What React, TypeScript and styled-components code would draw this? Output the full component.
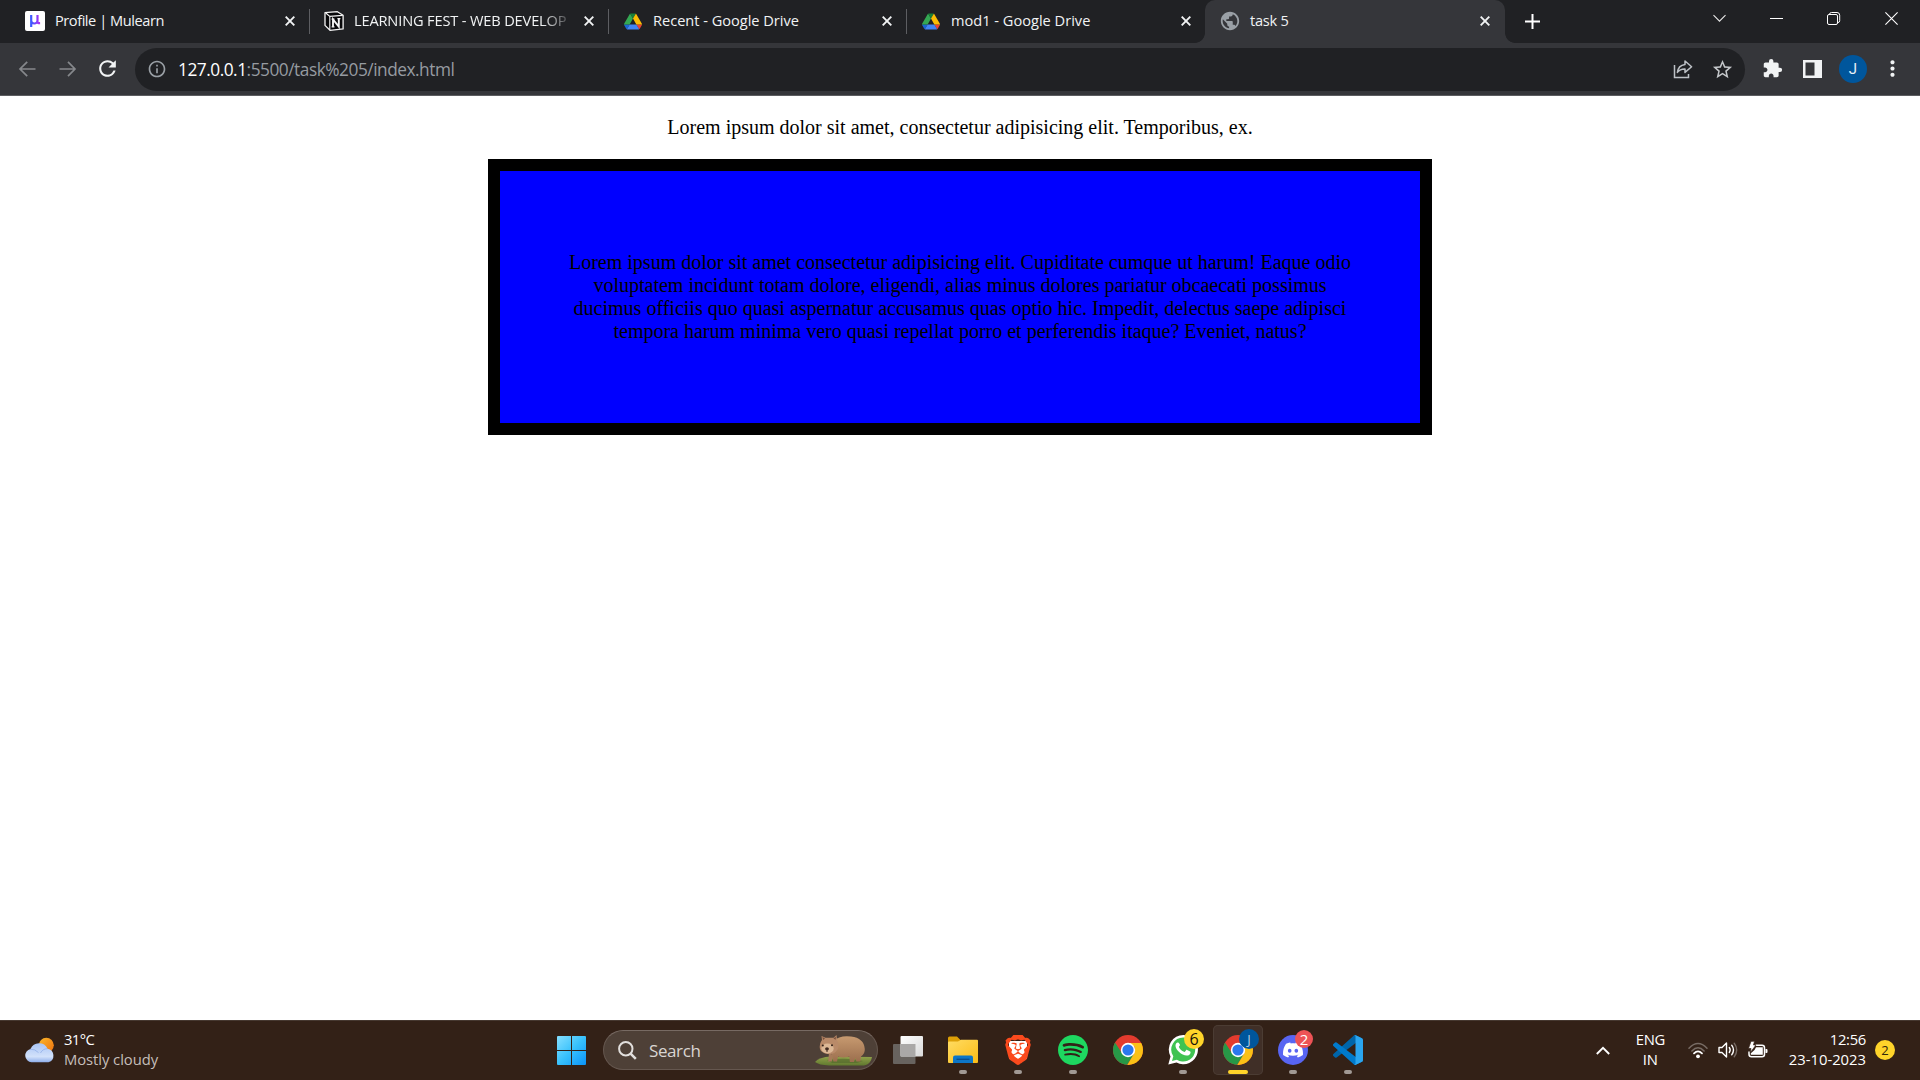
import React from 'react';
import styled, { createGlobalStyle, css } from 'styled-components';
import { MdRefresh, MdInfoOutline, MdExtension, MdStarBorder, MdPublic, MdMoreVert } from 'react-icons/md';
import { SiBrave, SiSpotify, SiDiscord } from 'react-icons/si';

const GlobalStyle = createGlobalStyle`
  * { box-sizing: border-box; }
  body { margin: 0; background: #fff; overflow: hidden; }
  svg { display: block; flex: none; }
`;

const uiFont = css`font-family: 'Open Sans', 'Noto Sans', sans-serif;`;

const Screen = styled.div`
  display: flex;
  flex-direction: column;
  width: 1920px;
  height: 1080px;
  ${uiFont}
`;

/* ---------- tab strip ---------- */
const TabStrip = styled.header`
  display: flex;
  height: 43px;
  padding-left: 10px;
  background: #202124;
  color: #f1f3f4;
`;

const TabItem = styled.div<{ $active?: boolean; $divider?: boolean; $width: number }>`
  position: relative;
  display: flex;
  align-items: center;
  width: ${p => p.$width}px;
  height: 43px;
  padding: 0 ${p => (p.$active ? 15 : 14)}px 1px 15px;
  border-radius: 10px 10px 0 0;
  background: ${p => (p.$active ? '#35363a' : 'transparent')};

  &::after {
    content: '';
    display: ${p => (p.$divider ? 'block' : 'none')};
    position: absolute;
    right: -1px;
    top: 9px;
    width: 1px;
    height: 25px;
    background: #5d5e62;
  }
`;

const Flare = styled.span<{ $side: 'left' | 'right' }>`
  position: absolute;
  bottom: 0;
  ${p => p.$side}: -10px;
  width: 10px;
  height: 10px;
  background: radial-gradient(circle at ${p => (p.$side === 'left' ? '0 0' : '100% 0')}, transparent 9.5px, #35363a 10.2px);
`;

const Favicon = styled.span`
  display: flex;
  align-items: center;
  justify-content: center;
  flex: none;
  width: 20px;
  height: 20px;
  margin-right: 10px;
`;

const TabTitle = styled.span<{ $spacing: number; $fade?: boolean }>`
  flex: 1;
  white-space: nowrap;
  padding-bottom: 3px;
  font-size: 14.6px;
  line-height: 20px;
  letter-spacing: ${p => p.$spacing}px;
  ${p => p.$fade && css`
    -webkit-mask-image: linear-gradient(90deg, #000 188px, transparent 220px);
    mask-image: linear-gradient(90deg, #000 188px, transparent 220px);
  `}
`;

const MuBadge = styled.span`
  width: 20px;
  height: 20px;
  border-radius: 2px;
  background: #fff;
  display: flex;
  align-items: center;
  justify-content: center;
`;

const NewTab = styled.div`
  display: flex;
  align-items: center;
  margin-left: 20px;
  padding-bottom: 1px;
`;

const WindowControls = styled.div`
  display: flex;
  align-items: flex-start;
  margin-left: auto;
  padding: 12px 22px 0 0;
  gap: 44px;
`;

/* ---------- toolbar ---------- */
const Toolbar = styled.div`
  display: flex;
  align-items: center;
  height: 53px;
  padding: 0 0 1px 17px;
  background: #35363a;
  border-bottom: 1px solid #5c5d60;
`;

const NavButtons = styled.div`
  display: flex;
  flex: none;
  align-items: center;
  gap: 20px;
  width: 118px;

  svg:last-child { margin-left: -2px; }
`;

const UrlBar = styled.div`
  display: flex;
  flex: none;
  align-items: center;
  width: 1610px;
  height: 43px;
  margin-top: 1px;
  padding: 0 11px 0 12px;
  border-radius: 22px;
  background: #202124;
`;

const Url = styled.span`
  flex: 1;
  margin-left: 11px;
  padding-top: 1px;
  color: #969ba1;
  font-size: 17.3px;
  line-height: 24px;
  letter-spacing: -0.48px;
  b { color: #fff; font-weight: 400; }
`;

const UrlActions = styled.div`
  display: flex;
  align-items: center;
  gap: 18px;
`;

const Extensions = styled.div`
  display: flex;
  margin-left: 7px;
`;

const ToolButton = styled.span`
  display: flex;
  align-items: center;
  justify-content: center;
  width: 40px;
  height: 40px;
`;

const Avatar = styled.span`
  display: flex;
  align-items: center;
  justify-content: center;
  width: 28px;
  height: 28px;
  margin-left: 2px;
  border-radius: 50%;
  background: #00569c;
  color: #e8f0f8;
  font: 15px Roboto, sans-serif;
`;

/* ---------- page ---------- */
const Page = styled.main`
  flex: 1;
  display: flex;
  flex-direction: column;
  align-items: center;
  background: #fff;
  color: #000;
  font-family: 'Liberation Serif', 'Times New Roman', serif;
  font-size: 20px;
  line-height: 23px;
  text-align: center;
`;

const Intro = styled.p`
  margin: 20px 0;
`;

const BlueBox = styled.section`
  width: 944px;
  height: 276px;
  padding: 80px 60px;
  border: 12px solid #000;
  background: #00f;
`;

const Copy = styled.p`
  margin: 0;
`;

/* ---------- taskbar ---------- */
const Taskbar = styled.footer`
  display: flex;
  align-items: center;
  height: 60px;
  background: #332117;
  box-shadow: inset 0 1px #463830;
  color: #fff;
`;

const Weather = styled.div`
  display: flex;
  align-items: center;
  width: 557px;
  padding-left: 24px;
  gap: 8px;
`;

const Stack = styled.div<{ $align?: string }>`
  display: flex;
  flex-direction: column;
  padding-bottom: 3px;
  text-align: ${p => p.$align || 'left'};
  font-size: 14.8px;
  line-height: 20px;
  white-space: nowrap;
`;

const Line = styled.span<{ $dim?: boolean; $spacing?: number }>`
  color: ${p => (p.$dim ? '#c5beba' : '#fff')};
  letter-spacing: ${p => p.$spacing || 0}px;
`;

const SearchBox = styled.div`
  display: flex;
  align-items: center;
  width: 275px;
  height: 40px;
  margin: 0 5px 0 17px;
  padding: 0 4px 0 14px;
  border: 1px solid #65574f;
  border-top-color: #776a63;
  border-radius: 20px;
  background: #4e4037;
`;

const SearchLabel = styled.span`
  flex: 1;
  margin-left: 12px;
  padding-top: 1px;
  color: #d9d5d2;
  font-size: 17px;
  line-height: 24px;
  letter-spacing: -0.4px;
`;

const AppButton = styled.div<{ $active?: boolean }>`
  position: relative;
  display: flex;
  align-items: center;
  justify-content: center;
  width: 50px;
  height: 50px;
  margin-right: 5px;
  border-radius: 5px;
  ${p => p.$active && css`
    background: #402f27;
    box-shadow: inset 0 0 0 1px #4b3c33;
  `}
`;

const Indicator = styled.span<{ $active?: boolean }>`
  position: absolute;
  bottom: 1px;
  left: 50%;
  width: ${p => (p.$active ? 20 : 8)}px;
  height: 4px;
  border-radius: 2px;
  transform: translateX(-50%);
  background: ${p => (p.$active ? '#ffd42a' : '#a19994')};
`;

const Badge = styled.span<{ $bg: string; $fg: string; $size: number; $text?: number }>`
  position: absolute;
  left: ${p => 36 - p.$size / 2}px;
  top: ${p => 14 - p.$size / 2}px;
  display: flex;
  align-items: center;
  justify-content: center;
  width: ${p => p.$size}px;
  height: ${p => p.$size}px;
  border-radius: 50%;
  background: ${p => p.$bg};
  color: ${p => p.$fg};
  font-size: ${p => p.$text || 15}px;
  line-height: 18px;
`;

const Disc = styled.span`
  display: flex;
  align-items: center;
  justify-content: center;
  width: 30px;
  height: 30px;
  border-radius: 50%;
  background: #5865f2;
`;

/* The lion's face is cut out of the shield, so a white plate sits behind it. */
const BraveBadge = styled.span`
  display: flex;
  background: linear-gradient(#fff, #fff) center 6px / 18px 18px no-repeat;
`;

const Tray = styled.div`
  display: flex;
  align-items: center;
  margin-left: auto;
  padding-right: 25px;
`;

const Language = styled(Stack)`
  margin-left: 26px;
  padding-bottom: 2px;
`;

const TrayIcons = styled.div`
  display: flex;
  align-items: center;
  gap: 10px;
  margin: 0 21px 0 23px;

  svg:last-child { margin-left: -1px; }
`;

const Count = styled.span`
  display: flex;
  align-items: center;
  justify-content: center;
  width: 20px;
  height: 20px;
  margin-left: 9px;
  border-radius: 50%;
  background: #ffd42a;
  color: #33270a;
  font-size: 13px;
`;

/* ---------- drawings ---------- */
const CloseX = () => (
  <svg width="10" height="10" viewBox="0 0 10 10" stroke="#f1f3f4" strokeWidth="1.9">
    <path d="M.7.7l8.6 8.6M9.3.7L.7 9.3" />
  </svg>
);

const MuMark = () => (
  <svg width="12" height="14" viewBox="0 0 12 14" fill="none" strokeWidth="2.2">
    <defs>
      <linearGradient id="mu" x1="0" x2="1">
        <stop offset="0" stopColor="#3b5bff" />
        <stop offset="1" stopColor="#b42df2" />
      </linearGradient>
    </defs>
    <path d="M2.2 1v12M2.2 6.500c0 4 6.300 4 6.300 0V1V8q0 1.300 2.600 1.200" stroke="url(#mu)" />
  </svg>
);

const NotionMark = () => (
  <svg width="20" height="20" viewBox="0 0 20 20">
    <path d="M1 1.600L13.400.7l5.700 3.600v13.600L6 19.300 1 14.400z" fill="#08080a" stroke="#f4f4f4" strokeWidth="1.300" strokeLinejoin="round" />
    <path d="M1.800 2L5.800 5.400l13-1M5.800 5.400v13.400" fill="none" stroke="#f4f4f4" strokeWidth="1.100" />
    <path d="M9 16V8.400L14.800 15.600V7.600" fill="none" stroke="#f4f4f4" strokeWidth="1.900" />
    <path d="M7.600 8.100h2.800M13.400 7.700h3M7.600 15.900h2.900" stroke="#f4f4f4" strokeWidth="1.200" />
  </svg>
);

const DriveMark = () => (
  <svg width="18" height="17" viewBox="0 0 87.3 78">
    <path d="m6.6 66.85 3.85 6.65c.8 1.4 1.95 2.5 3.3 3.3l13.75-23.8h-27.5c0 1.55.4 3.1 1.2 4.5z" fill="#1967d2" />
    <path d="m43.65 25-13.75-23.8c-1.35.8-2.5 1.9-3.3 3.3l-25.4 44a9.06 9.06 0 0 0-1.2 4.5h27.5z" fill="#34a853" />
    <path d="m73.55 76.8c1.35-.8 2.5-1.9 3.3-3.3l1.6-2.75 7.65-13.25c.8-1.4 1.2-2.95 1.2-4.5h-27.5l5.85 11.5z" fill="#ea4335" />
    <path d="m43.65 25 13.75-23.8c-1.35-.8-2.9-1.2-4.5-1.2h-18.5c-1.6 0-3.15.45-4.5 1.2z" fill="#188038" />
    <path d="m59.8 53h-32.3l-13.75 23.8c1.35.8 2.9 1.2 4.5 1.2h50.8c1.6 0 3.15-.45 4.5-1.2z" fill="#4285f4" />
    <path d="m73.4 26.5-12.7-22c-.8-1.4-1.95-2.5-3.3-3.3l-13.75 23.8 16.15 28h27.45c0-1.55-.4-3.1-1.2-4.5z" fill="#fbbc04" />
  </svg>
);

const Arrow = ({ flip }: { flip?: boolean }) => (
  <svg width="20" height="20" viewBox="0 0 20 20" fill="none" stroke="#86888c" strokeWidth="1.7">
    <path d={flip ? 'M2.500 10h15.500M11 2.800L18 10l-7 7.200' : 'M18.500 10H3.200M10.200 2.800L3 10l7.200 7.200'} />
  </svg>
);

const ShareIcon = () => (
  <svg width="20" height="20" viewBox="0 0 20 20" fill="none" stroke="#bdc1c6" strokeWidth="1.500">
    <path d="M1.500 6v12.500h14V15" />
    <path d="M12 2l6.600 5.800L12 13.400v-3.300c-3.400-.1-5.700.8-7.600 3.300.5-4.300 3-7.300 7.600-7.900z" strokeLinejoin="round" />
  </svg>
);

const ChromeMark = ({ id }: { id: string }) => (
  <svg width="30" height="30" viewBox="0 0 30 30">
    <defs>
      <clipPath id={id}><circle cx="15" cy="15" r="15" /></clipPath>
    </defs>
    <g clipPath={`url(#${id})`}>
      <rect width="30" height="30" fill="#e33b2e" />
      <path d="M2 7.500L9.200 18.500 15 22 21 19 14 30H0V4z" fill="#279847" />
      <path d="M15 8h16v24H13.200l7.900-13.500L22 12z" fill="#fbc116" />
    </g>
    <circle cx="15" cy="15" r="7.200" fill="#fff" />
    <circle cx="15" cy="15" r="5.600" fill="#2b78ee" />
  </svg>
);

const WeatherIcon = () => (
  <svg width="32" height="28" viewBox="0 0 32 28">
    <defs>
      <linearGradient id="sun" x2="1" y2="1"><stop stopColor="#fbb82a" /><stop offset="1" stopColor="#f0710e" /></linearGradient>
      <linearGradient id="cl" y2="1" x2="0"><stop stopColor="#a9c5f6" /><stop offset=".7" stopColor="#d2e1fa" /><stop offset="1" stopColor="#8eaeeb" /></linearGradient>
    </defs>
    <circle cx="22.300" cy="9.200" r="7.500" fill="url(#sun)" />
    <path d="M7.500 26.300a6.800 6.800 0 0 1-1-13.400A9.300 9.300 0 0 1 23.500 12.700a7 7 0 0 1 1 13.600z" fill="url(#cl)" />
    <path d="M6 13.200q5-.4 8.500 3.400M16.500 17q2-4.200 7-4.300" stroke="#86a6e4" strokeWidth=".9" fill="none" opacity=".7" />
  </svg>
);

const WindowsMark = () => (
  <svg width="29" height="29" viewBox="0 0 29 29">
    <defs>
      <linearGradient id="win" x2="1" y2="1"><stop stopColor="#86e0ff" /><stop offset=".5" stopColor="#38c1fc" /><stop offset="1" stopColor="#0a93f8" /></linearGradient>
    </defs>
    <path d="M1 0h13v14H0V1q0-1 1-1zM15 0h13q1 0 1 1v13H15zM0 15h14v14H1q-1 0-1-1zM15 15h14v13q0 1-1 1H15z" fill="url(#win)" />
  </svg>
);

const Capybara = () => (
  <svg width="58" height="34" viewBox="0 0 58 34">
    <defs>
      <linearGradient id="fur" x2="0" y2="1"><stop stopColor="#c79a70" /><stop offset="1" stopColor="#9b6e4d" /></linearGradient>
      <linearGradient id="grass" x2="0" y2="1"><stop stopColor="#91a14a" /><stop offset="1" stopColor="#60792f" /></linearGradient>
    </defs>
    <path d="M0 29q4-5 16-5.500L57 24q-1 7-8 8.500H14Q4 32 0 29z" fill="url(#grass)" />
    <path d="M12 27q20-3 36 1l-6 2H17z" fill="#50662c" opacity=".6" />
    <path d="M18 8Q25 2 36 3.500 49 5 49.800 16q.2 5-3.800 7.500l-.6 5h-4l-1-3.500-1.500 4h-4l-.6-5.500q-6 2-11.300 0L22 28.500h-3.500L16.500 22z" fill="url(#fur)" />
    <path d="M14 20l-.8 8.500h3.600L18 22z" fill="#a77b59" />
    <path d="M7 7l-.5-4 4 1.800h8L21.500 2l.5 5q3 6 .5 9.500-3.500 5.500-9.500 4.500-6.500-.8-8-5Q4 11 7 7z" fill="#b98a69" />
    <ellipse cx="12.500" cy="15.500" rx="6.200" ry="5" fill="#dcb795" />
    <path d="M7.500 4l2.500 1.400L8 7zM20.800 3.400L18.500 5.600l2.200 1.200z" fill="#754f3c" />
    <circle cx="7.800" cy="12.500" r="1" fill="#332119" />
    <circle cx="17" cy="12.300" r="1" fill="#332119" />
    <ellipse cx="12" cy="15.800" rx="1.900" ry="1.600" fill="#422a20" />
    <path d="M12 17v2" stroke="#422a20" />
  </svg>
);

const TaskView = () => (
  <svg width="30" height="28" viewBox="0 0 30 28">
    <defs><linearGradient id="tv" x2="1" y2="1"><stop stopColor="#fff" /><stop offset="1" stopColor="#d9d9d9" /></linearGradient></defs>
    <rect y="8" width="22.500" height="20" rx="1" fill="#68635f" />
    <rect x="7.500" width="22.500" height="20.500" rx="1" fill="url(#tv)" />
    <path d="M7.500 8h15v12.500h-15z" fill="#aaa8a7" />
  </svg>
);

const Folder = () => (
  <svg width="30" height="28" viewBox="0 0 30 28">
    <defs><linearGradient id="fo" x2="1" y2="1"><stop stopColor="#ffdc63" /><stop offset="1" stopColor="#fbbc16" /></linearGradient></defs>
    <path d="M0 2q0-1.500 1.500-1.500H9L12.500 4H28v6H0z" fill="#dda007" />
    <path d="M0 6.500q0-1 1-1h9L13 3.700h16q1 0 1 1V26q0 1-1 1H1q-1 0-1-1z" fill="url(#fo)" />
    <path d="M5 27v-5.500q0-2 2-2h16q2 0 2 2V27z" fill="#0d76c7" />
    <path d="M8.500 23.300h13" stroke="#0b4c8c" strokeWidth="1.300" />
  </svg>
);

const WhatsApp = () => (
  <svg width="32" height="32" viewBox="0 0 32 32">
    <path d="M16.500 1a14.600 14.600 0 1 1-7 27.500L1.300 30.500l2.200-8A14.600 14.600 0 0 1 16.500 1z" fill="#fff" />
    <path d="M16.500 3.600a12 12 0 1 1-6.600 22.200L5 27l1.300-4.800A12 12 0 0 1 16.500 3.600z" fill="#3fc351" />
    <path d="M12.200 9.600c-.5-1-.9-1-1.500-1-.8 0-2.200 1.100-2.200 3.200 0 3.800 6 9.800 11.200 9.800 2.200 0 3.700-1.300 3.900-3.400 0-.5-.2-.7-.5-.8l-3-1.500c-.5-.2-.8 0-1 .3l-1.200 1.500c-.3.300-.5.300-.9.100-2.300-1-3.900-2.500-5-4.600-.2-.4-.1-.6.200-.9l.9-1.300z" fill="#fff" />
  </svg>
);

const VsCode = () => (
  <svg width="30" height="30" viewBox="0 0 100 100">
    <path d="M96.500 10.800L75.900.9a6.200 6.200 0 0 0-7.100 1.200L1.300 63.600a4.200 4.200 0 0 0 0 6.200l5.500 5a4.200 4.200 0 0 0 5.300.2L93.400 13.400a4.100 4.100 0 0 1 6.600 3.300v-.2c0-2.500-1.400-4.700-3.500-5.700z" fill="#0065a9" />
    <path d="M96.500 89.200L75.900 99.100a6.200 6.200 0 0 1-7.100-1.200L1.300 36.400a4.200 4.200 0 0 1 0-6.200l5.500-5a4.200 4.200 0 0 1 5.300-.2l81.300 61.600a4.100 4.100 0 0 0 6.600-3.300v.2c0 2.500-1.400 4.700-3.500 5.700z" fill="#007acc" />
    <path d="M75.900 99.100a6.200 6.200 0 0 1-7.100-1.200c2.300 2.300 6.200.7 6.200-2.600V4.700c0-3.300-3.900-4.900-6.200-2.600a6.200 6.200 0 0 1 7.100-1.200l20.600 9.900a6.200 6.200 0 0 1 3.500 5.700v67a6.200 6.200 0 0 1-3.500 5.700z" fill="#2aa5ef" />
  </svg>
);

const Wifi = () => (
  <svg width="20" height="17" viewBox="0 0 20 17" fill="none" strokeWidth="1.500" strokeLinecap="round">
    <path d="M1 6.200Q10-3 19 6.200M3.900 9Q10 2.600 16.100 9" stroke="#776b64" />
    <path d="M6 11.300q4-3.900 8 0" stroke="#fff" strokeWidth="1.800" />
    <circle cx="10" cy="14.300" r="1.900" fill="#fff" />
  </svg>
);

const Volume = () => (
  <svg width="20" height="18" viewBox="0 0 20 18" fill="none" stroke="#fff" strokeWidth="1.400" strokeLinecap="round" strokeLinejoin="round">
    <path d="M1 6.500h3L8.500 2v14L4 11.500H1z" />
    <path d="M11.300 6.500q1.800 2.500 0 5M13.700 4.200q3.600 4.800 0 9.600" />
    <path d="M16.200 2.200q5 6.800 0 13.600" stroke="#776b64" />
  </svg>
);

const Battery = () => (
  <svg width="21" height="18" viewBox="0 0 21 18">
    <path d="M8.500 4.300H15q2.500 0 2.500 2.500v6.400q0 2.500-2.500 2.500H4.500Q2 15.700 2 13.200V10.500" fill="none" stroke="#fff" strokeWidth="1.500" />
    <path d="M18.500 8h1q1 0 1 1v2q0 1-1 1h-1z" fill="#fff" />
    <path d="M9 6.300h6.800v7.500H3.800v-1.500L7.500 9z" fill="#fff" />
    <path d="M4 .3h3.500L6.500 4H9l-5.600 7.500L4 7.500H1.500z" fill="#fff" stroke="#332117" strokeWidth=".7" />
  </svg>
);

const driveTabs = [
  { title: 'Recent - Google Drive', width: 298, spacing: -0.02, divider: true },
  { title: 'mod1 - Google Drive', width: 299, spacing: 0, divider: false },
];

export default function App() {
  return (
    <Screen>
      <GlobalStyle />
      <TabStrip>
        <TabItem $width={299} $divider>
          <Favicon><MuBadge><MuMark /></MuBadge></Favicon>
          <TabTitle $spacing={-0.45}>Profile | Mulearn</TabTitle>
          <CloseX />
        </TabItem>
        <TabItem $width={299} $divider>
          <Favicon><NotionMark /></Favicon>
          <TabTitle $spacing={-0.15} $fade>LEARNING FEST - WEB DEVELOP</TabTitle>
          <CloseX />
        </TabItem>
        {driveTabs.map(tab => (
          <TabItem key={tab.title} $width={tab.width} $divider={tab.divider}>
            <Favicon><DriveMark /></Favicon>
            <TabTitle $spacing={tab.spacing}>{tab.title}</TabTitle>
            <CloseX />
          </TabItem>
        ))}
        <TabItem $width={300} $active>
          <Flare $side="left" />
          <Favicon><MdPublic size={22} color="#9aa0a6" /></Favicon>
          <TabTitle $spacing={-0.25}>task 5</TabTitle>
          <CloseX />
          <Flare $side="right" />
        </TabItem>
        <NewTab>
          <svg width="15" height="15" viewBox="0 0 15 15" stroke="#fff" strokeWidth="2"><path d="M7.500 0v15M0 7.500h15" /></svg>
        </NewTab>
        <WindowControls>
          <svg width="13" height="13" viewBox="0 0 13 13" fill="none" stroke="#e8e8e8" strokeWidth="1.100"><path d="M.5 3.200l6 6 6-6" /></svg>
          <svg width="13" height="13" viewBox="0 0 13 13" stroke="#fff"><path d="M0 6.500h13" /></svg>
          <svg width="14" height="13" viewBox="0 0 14 13" fill="none" stroke="#fff">
            <rect x=".5" y="2.500" width="10" height="10" rx="1.500" /><path d="M2.500 2.300Q2.700.5 4.500.5h5.500q2.700 0 2.700 2.700v5.500q0 1.700-1.900 2" />
          </svg>
          <svg width="13" height="13" viewBox="0 0 13 13" stroke="#fff" strokeWidth="1.100"><path d="M.4.400l12.200 12.200M12.600.400L.4 12.600" /></svg>
        </WindowControls>
      </TabStrip>

      <Toolbar>
        <NavButtons>
          <Arrow />
          <Arrow flip />
          <MdRefresh size={25} color="#f1f3f4" />
        </NavButtons>
        <UrlBar>
          <MdInfoOutline size={20} color="#9aa0a6" />
          <Url><b>127.0.0.1</b>:5500/task%205/index.html</Url>
          <UrlActions>
            <ShareIcon />
            <MdStarBorder size={23} color="#c4c7ca" />
          </UrlActions>
        </UrlBar>
        <Extensions>
          <ToolButton><MdExtension size={21} color="#f1f3f4" /></ToolButton>
          <ToolButton>
            <svg width="19" height="18" viewBox="0 0 19 18"><path d="M0 0h19v18H0zM2.500 2.500v13h9v-13z" fill="#f1f3f4" fillRule="evenodd" /></svg>
          </ToolButton>
          <ToolButton><Avatar>J</Avatar></ToolButton>
          <ToolButton><MdMoreVert size={25} color="#f1f3f4" /></ToolButton>
        </Extensions>
      </Toolbar>

      <Page>
        <Intro>Lorem ipsum dolor sit amet, consectetur adipisicing elit. Temporibus, ex.</Intro>
        <BlueBox>
          <Copy>
            Lorem ipsum dolor sit amet consectetur adipisicing elit. Cupiditate cumque ut harum! Eaque odio
            voluptatem incidunt totam dolore, eligendi, alias minus dolores pariatur obcaecati possimus
            ducimus officiis quo quasi aspernatur accusamus quas optio hic. Impedit, delectus saepe adipisci
            tempora harum minima vero quasi repellat porro et perferendis itaque? Eveniet, natus?
          </Copy>
        </BlueBox>
      </Page>

      <Taskbar>
        <Weather>
          <WeatherIcon />
          <Stack>
            <Line $spacing={-0.6}>31°C</Line>
            <Line $dim $spacing={-0.06}>Mostly cloudy</Line>
          </Stack>
        </Weather>
        <WindowsMark />
        <SearchBox>
          <svg width="19" height="19" viewBox="0 0 19 19" fill="none" stroke="#e2dfdd" strokeWidth="2"><circle cx="7.800" cy="7.800" r="6.700" /><path d="M12.600 12.600l5.200 5.200" strokeWidth="2.500" /></svg>
          <SearchLabel>Search</SearchLabel>
          <Capybara />
        </SearchBox>
        <AppButton><TaskView /></AppButton>
        <AppButton><Folder /><Indicator /></AppButton>
        <AppButton><BraveBadge><SiBrave size={30} color="#fb4a1d" /></BraveBadge><Indicator /></AppButton>
        <AppButton><SiSpotify size={30} color="#1ed760" /><Indicator /></AppButton>
        <AppButton><ChromeMark id="chrome-a" /></AppButton>
        <AppButton><WhatsApp /><Badge $bg="#ffd42a" $fg="#1a1508" $size={20} $text={16}>6</Badge><Indicator /></AppButton>
        <AppButton $active><ChromeMark id="chrome-b" /><Badge $bg="#00569c" $fg="#b9cde0" $size={20} $text={13}>J</Badge><Indicator $active /></AppButton>
        <AppButton><Disc><SiDiscord size={20} color="#fff" /></Disc><Badge $bg="#ee5356" $fg="#fff" $size={18}>2</Badge><Indicator /></AppButton>
        <AppButton><VsCode /><Indicator /></AppButton>
        <Tray>
          <svg width="14" height="9" viewBox="0 0 14 9" fill="none" stroke="#fff" strokeWidth="1.900"><path d="M.8 8L7 1.800 13.200 8" /></svg>
          <Language $align="center">
            <Line $spacing={-0.4}>ENG</Line>
            <Line>IN</Line>
          </Language>
          <TrayIcons><Wifi /><Volume /><Battery /></TrayIcons>
          <Stack $align="right">
            <Line $spacing={-0.3}>12:56</Line>
            <Line $spacing={0}>23-10-2023</Line>
          </Stack>
          <Count>2</Count>
        </Tray>
      </Taskbar>
    </Screen>
  );
}
